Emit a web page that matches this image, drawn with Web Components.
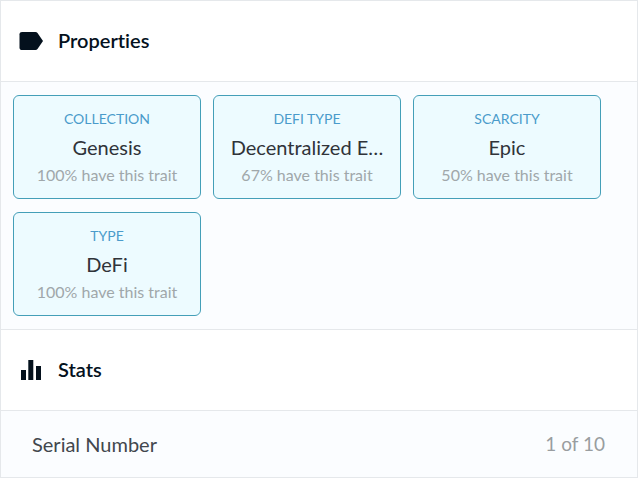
<!DOCTYPE html>
<html lang="en">
<head>
<meta charset="utf-8">
<title>Properties</title>
<style>
body { margin: 0; font-family: Lato, "Noto Sans", sans-serif; font-variant-ligatures: none; background: #fff; color: #303339; }
</style>
</head>
<body>
<asset-details>
  <info-panel heading="Properties">
    <svg slot="icon" width="24" height="24" viewBox="0 0 24 24" aria-hidden="true"><path fill="#04111d" d="M3 3H16.500C17.300 3 18 3.400 18.500 4L24 12L18.500 20C18 20.600 17.300 21 16.500 21H3C1.600 21 .5 20.100 .5 18.700V5.300C.5 3.900 1.600 3 3 3Z"/></svg>
    <trait-grid>
      <trait-card kind="Collection" value="Genesis" share="100%"></trait-card>
      <trait-card kind="DeFi Type" value="Decentralized E…" share="67%"></trait-card>
      <trait-card kind="Scarcity" value="Epic" share="50%"></trait-card>
      <trait-card kind="Type" value="DeFi" share="100%"></trait-card>
    </trait-grid>
  </info-panel>
  <info-panel heading="Stats">
    <svg slot="icon" width="24" height="24" viewBox="0 0 24 24" aria-hidden="true"><path fill="#04111d" d="M2 12h5v10H2zM9.300 2h5v20h-5zM17 8h5v14h-5z"/></svg>
    <stat-row label="Serial Number" value="1 of 10"></stat-row>
  </info-panel>
</asset-details>
<script>
class BaseElement extends HTMLElement {
  connectedCallback() {
    if (!this.shadowRoot) this.attachShadow({ mode: "open" }).innerHTML = this.render();
  }
}
customElements.define("asset-details", class extends BaseElement {
  render() {
    return `<style>:host{display:block;box-sizing:border-box;border:1px solid #e5e8eb}</style><slot></slot>`;
  }
});
customElements.define("info-panel", class extends BaseElement {
  render() {
    return `<style>
      :host{display:block}
      :host(:not(:first-child)){border-top:1px solid #e5e8eb}
      header{display:flex;align-items:center;gap:15px;padding:0 18px;height:80px;background:#fff}
      h2{margin:0;padding-bottom:2px;font-size:20px;line-height:24px;font-weight:600;color:#04111d}
      .body{border-top:1px solid #e5e8eb;background:#fbfdff}
    </style>
    <header><slot name="icon"></slot><h2>${this.getAttribute("heading")}</h2></header>
    <div class="body"><slot></slot></div>`;
  }
});
customElements.define("trait-grid", class extends BaseElement {
  render() {
    return `<style>:host{display:grid;grid-template-columns:repeat(auto-fill,188px);gap:13px 12px;padding:13px 12px}</style><slot></slot>`;
  }
});
customElements.define("trait-card", class extends BaseElement {
  render() {
    return `<style>
      :host{display:block;box-sizing:border-box;min-width:0;padding:10px;border:1px solid #449fb8;border-radius:6px;background:#edfbff;text-align:center}
      div{overflow:hidden;text-overflow:ellipsis;white-space:nowrap}
      .kind{font-size:14px;line-height:26px;text-transform:uppercase;color:#4a9bcb}
      .value{font-size:20px;line-height:30px;color:#303339}
      .share{font-size:16px;line-height:26px;color:#a0a7aa}
    </style>
    <div class="kind">${this.getAttribute("kind")}</div>
    <div class="value">${this.getAttribute("value")}</div>
    <div class="share">${this.getAttribute("share")} have this trait</div>`;
  }
});
customElements.define("stat-row", class extends BaseElement {
  render() {
    return `<style>
      :host{display:flex;justify-content:space-between;padding:20px 32px 20px 31px;font-size:20px;line-height:26px}
      .label{color:#42474d}
      .value{font-size:19px;color:#999da0}
    </style>
    <span class="label">${this.getAttribute("label")}</span><span class="value">${this.getAttribute("value")}</span>`;
  }
});
</script>
</body>
</html>
